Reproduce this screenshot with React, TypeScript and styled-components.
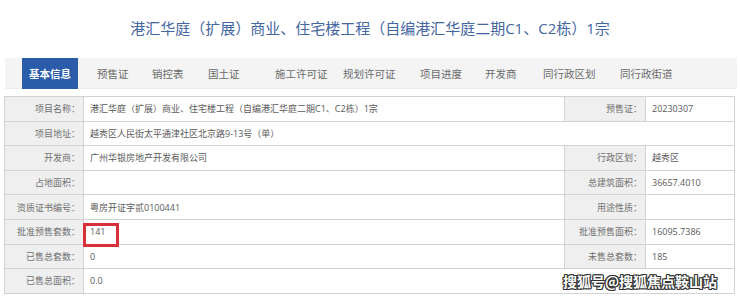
import React from 'react'
import styled, { createGlobalStyle } from 'styled-components'

const GlobalStyle = createGlobalStyle`
  html, body {
    margin: 0;
    padding: 0;
    background: #fff;
  }
  body {
    font-family: "Open Sans", "Noto Sans CJK SC", sans-serif;
    color: #333;
  }
`

const tabs = [
  { name: '基本信息', width: 56, active: true },
  { name: '预售证', width: 55 },
  { name: '销控表', width: 56 },
  { name: '国土证', width: 67 },
  { name: '施工许可证', width: 68 },
  { name: '规划许可证', width: 77 },
  { name: '项目进度', width: 65 },
  { name: '开发商', width: 58 },
  { name: '同行政区划', width: 77 },
  { name: '同行政街道', width: 80 },
]

const App = () => {
  return (
    <Page>
      <GlobalStyle />
      <Title>港汇华庭（扩展）商业、住宅楼工程（自编港汇华庭二期C1、C2栋）1宗</Title>
      <TabBar>
        {tabs.map((t, i) => (
          <Tab key={i} $w={t.width} $active={!!t.active} $first={i === 1}>
            {t.name}
          </Tab>
        ))}
      </TabBar>
      <Table>
        <colgroup>
          <col style={{ width: 79 }} />
          <col style={{ width: 481 }} />
          <col style={{ width: 81 }} />
          <col />
        </colgroup>
        <tbody>
          <tr>
            <Label>项目名称：</Label>
            <Value>港汇华庭（扩展）商业、住宅楼工程（自编港汇华庭二期C1、C2栋）1宗</Value>
            <Label>预售证：</Label>
            <Value>20230307</Value>
          </tr>
          <tr>
            <Label>项目地址：</Label>
            <Value colSpan={3}>越秀区人民街太平通津社区北京路9-13号（单）</Value>
          </tr>
          <tr>
            <Label>开发商：</Label>
            <Value>广州华银房地产开发有限公司</Value>
            <Label>行政区划：</Label>
            <Value>越秀区</Value>
          </tr>
          <tr>
            <Label>占地面积：</Label>
            <Value />
            <Label>总建筑面积：</Label>
            <Value>36657.4010</Value>
          </tr>
          <tr>
            <Label>资质证书编号：</Label>
            <Value>粤房开证字贰0100441</Value>
            <Label>用途性质：</Label>
            <Value />
          </tr>
          <tr>
            <Label>批准预售套数：</Label>
            <Value>
              <Highlight />
              141
            </Value>
            <Label>批准预售面积：</Label>
            <Value>16095.7386</Value>
          </tr>
          <tr>
            <Label>已售总套数：</Label>
            <Value>0</Value>
            <Label>未售总套数：</Label>
            <Value>185</Value>
          </tr>
          <tr>
            <Label>已售总面积：</Label>
            <Value colSpan={3}>0.0</Value>
          </tr>
        </tbody>
      </Table>
      <Watermark>搜狐号@搜狐焦点鞍山站</Watermark>
    </Page>
  )
}

const Page = styled.div`
  position: relative;
  width: 740px;
  height: 299px;
  overflow: hidden;
`
const Title = styled.div`
  height: 58px;
  padding-bottom: 4px;
  box-sizing: border-box;
  display: flex;
  align-items: center;
  justify-content: center;
  font-size: 15px;
  color: #4365a0;
`
const TabBar = styled.div`
  display: flex;
  align-items: stretch;
  height: 30px;
  margin: 0 3px 0 5px;
  padding-left: 17px;
  background: #f4f4f4;
  border-bottom: 1px solid #ececec;
`
const Tab = styled.div<{ $w: number; $active: boolean; $first: boolean }>`
  flex: 0 0 auto;
  width: ${(p) => p.$w}px;
  margin-left: ${(p) => (p.$first ? 19 : 0)}px;
  height: ${(p) => (p.$active ? 31 : 30)}px;
  display: flex;
  align-items: center;
  justify-content: ${(p) => (p.$active ? 'center' : 'flex-start')};
  font-size: 10.5px;
  white-space: nowrap;
  color: ${(p) => (p.$active ? '#fff' : '#6a6a6a')};
  font-weight: ${(p) => (p.$active ? 700 : 400)};
  background: ${(p) => (p.$active ? '#2b5ca9' : 'transparent')};
`
const Table = styled.table`
  margin: 7px 5px 0 4px;
  width: 731px;
  border-collapse: collapse;
  table-layout: fixed;
  border: 1px solid #bdbdbd;
  font-size: 9px;
`
const Label = styled.td`
  height: 23.6px;
  padding: 0 3px 0 0;
  background: #efefef;
  color: #707070;
  text-align: right;
  border: 1px solid #d2d2d2;
  white-space: nowrap;
`
const Value = styled.td`
  position: relative;
  height: 23.6px;
  padding: 0 0 0 6px;
  color: #5a5a5a;
  text-align: left;
  border: 1px solid #d2d2d2;
  white-space: nowrap;
`
const Highlight = styled.span`
  position: absolute;
  left: -1px;
  top: 3px;
  width: 36px;
  height: 24px;
  box-sizing: border-box;
  border: 3px solid #d8313a;
`
const Watermark = styled.div`
  position: absolute;
  left: 563px;
  top: 271px;
  font-family: "Noto Sans CJK SC", sans-serif;
  font-size: 14px;
  font-weight: 700;
  color: #fff;
  text-shadow:
    1px 0 0 #333,
    -1px 0 0 #333,
    0 1px 0 #333,
    0 -1px 0 #333,
    1px 1px 0 #333,
    -1px -1px 0 #333,
    1px -1px 0 #333,
    -1px 1px 0 #333;
`

export default App
